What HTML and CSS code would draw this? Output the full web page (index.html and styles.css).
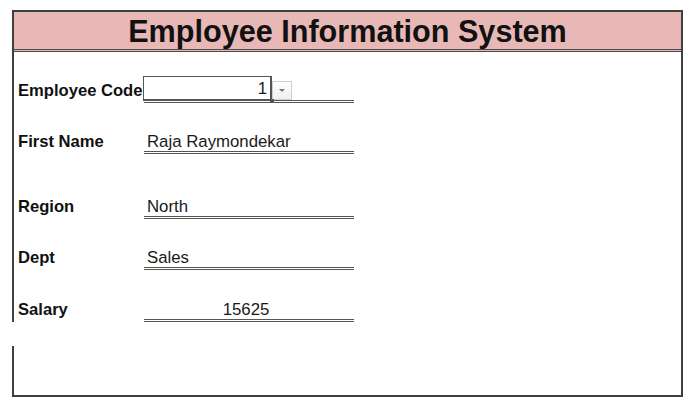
FILE: index.html
```html
<!DOCTYPE html>
<html>
<head>
<meta charset="utf-8">
<link rel="stylesheet" href="styles.css">
</head>
<body>
<div class="sheet">
  <div class="header"><h1 class="title">Employee Information System</h1></div>
  <div class="form">
    <div class="row row-code">
      <div class="label">Employee Code</div>
      <div class="field field-code">
        <div class="codebox">1<span class="handle"></span></div>
        <div class="dropbtn"><span class="tri"></span></div>
      </div>
    </div>
    <div class="row row-first">
      <div class="label">First Name</div>
      <div class="field">Raja Raymondekar</div>
    </div>
    <div class="row row-region">
      <div class="label">Region</div>
      <div class="field">North</div>
    </div>
    <div class="row row-dept">
      <div class="label">Dept</div>
      <div class="field">Sales</div>
    </div>
    <div class="row row-salary">
      <div class="label">Salary</div>
      <div class="field center">15625</div>
    </div>
  </div>
  <div class="gap-mask"></div>
</div>
</body>
</html>
```

FILE: styles.css
```css
html, body {
  margin: 0;
  padding: 0;
  background: #ffffff;
}
body {
  font-family: "Liberation Sans", Arial, sans-serif;
  color: #111;
}
.sheet {
  position: relative;
  margin: 10px 0 0 12px;
  width: 671px;
  height: 387px;
  box-sizing: border-box;
  border: 2px solid #3f3f3f;
  background: #fff;
}
.header {
  height: 37px;
  background: #e8b8b7;
  border-bottom: 3px double #4a4a4a;
  display: flex;
  align-items: center;
  justify-content: center;
}
.title {
  margin: 0;
  font-size: 30.6px;
  font-weight: bold;
  color: #111;
  line-height: 1;
  padding-top: 2px;
}
.form {
  padding: 25px 0 0 4px;
}
.row {
  display: flex;
  align-items: center;
  height: 26px;
}
.row-first { margin-top: 25px; }
.row-region { margin-top: 39px; }
.row-dept { margin-top: 25px; }
.row-salary { margin-top: 26px; }
.label {
  width: 126px;
  font-weight: bold;
  font-size: 16.6px;
  padding-top: 1px;
  white-space: nowrap;
}
.field {
  width: 210px;
  height: 26px;
  box-sizing: border-box;
  border-bottom: 3px double #555;
  font-size: 16.8px;
  line-height: 22px;
  padding-top: 3px;
  padding-left: 3px;
  color: #1a1a1a;
}
.field.center {
  text-align: center;
  padding-left: 0;
  padding-right: 6px;
}
.field-code {
  display: flex;
  align-items: flex-start;
  padding-left: 0;
  padding-top: 0;
}
.codebox {
  position: relative;
  margin-left: -1px;
  margin-top: -1px;
  width: 129px;
  height: 25px;
  box-sizing: border-box;
  border: 1px solid #555;
  border-width: 1px 2px 2px 1px;
  text-align: right;
  padding-right: 3px;
  font-size: 16.8px;
  line-height: 24px;
  background: #fff;
}
.handle {
  position: absolute;
  right: -4px;
  bottom: -4px;
  width: 4px;
  height: 4px;
  background: #555;
}
.dropbtn {
  margin-top: 4px;
  width: 20px;
  height: 19px;
  box-sizing: border-box;
  border: 1px solid #cfcfcf;
  background: linear-gradient(#ffffff, #f0f0f0);
  display: flex;
  align-items: center;
  justify-content: center;
}
.tri {
  width: 0;
  height: 0;
  border-left: 3px solid transparent;
  border-right: 3px solid transparent;
  border-top: 3px solid #777;
}
.gap-mask {
  position: absolute;
  left: -2px;
  top: 310px;
  width: 2px;
  height: 24px;
  background: #fff;
}
```
